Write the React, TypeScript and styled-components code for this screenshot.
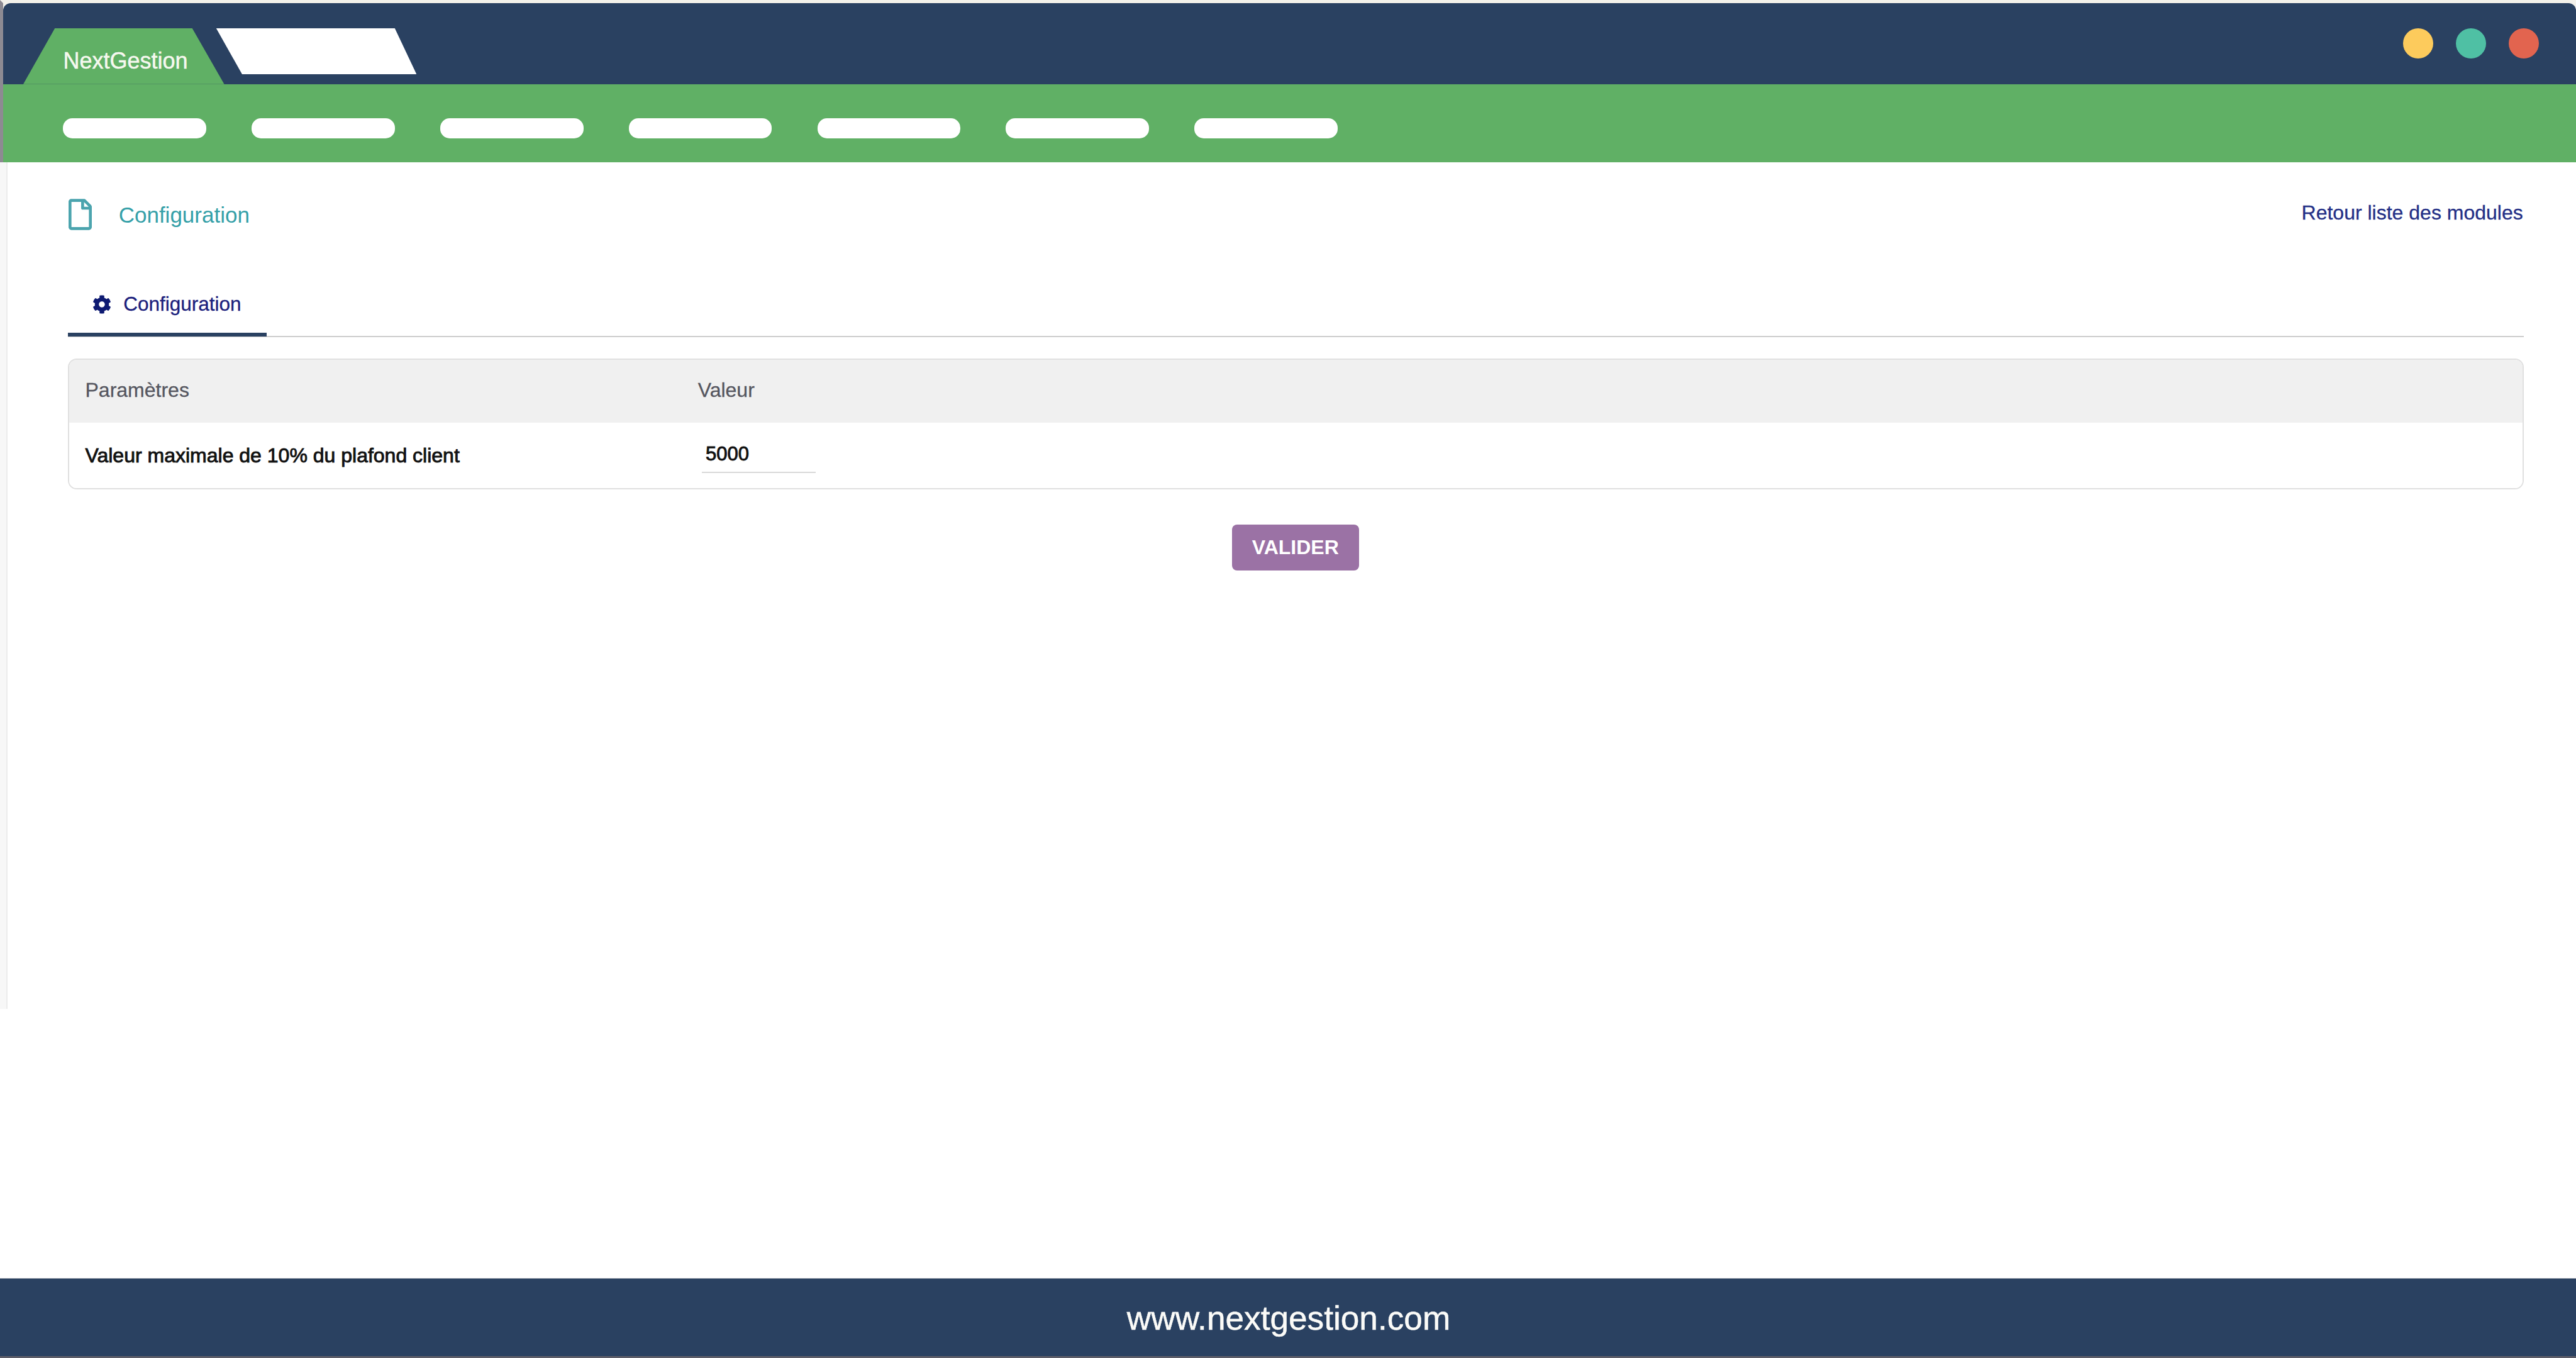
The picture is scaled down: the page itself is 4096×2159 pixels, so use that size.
import React from "react";
import styled, { createGlobalStyle } from "styled-components";
import { FaCog, FaRegFile } from "react-icons/fa";

const navy = "#2a4161";
const green = "#60b065";

const GlobalStyle = createGlobalStyle`
  html, body {
    margin: 0;
    padding: 0;
    background: #fff;
  }
  body {
    font-family: "Liberation Sans", Arial, sans-serif;
  }
  * {
    box-sizing: border-box;
  }
`;

const Shell = styled.div`
  display: flex;
  flex-direction: column;
  min-height: 2159px;
  height: 2159px;
  overflow: hidden;
`;

const Chrome = styled.div`
  flex: none;
  background: #f3f1ea;
  border-top: 5px solid #f3f1ea;
  border-left: 5px solid #8d8a92;
`;

const TopBar = styled.header`
  display: flex;
  align-items: flex-start;
  height: 128.8px;
  padding: 39.6px 58.6px 0 32px;
  background: ${navy};
  border-radius: 12px 12px 0 0;
`;

const BrandTab = styled.div`
  width: 319.5px;
  height: 89.2px;
  padding: 32.5px 0 0 63.5px;
  background: ${green};
  clip-path: polygon(15.8% 0, 84% 0, 100% 100%, 0 100%);
  color: #f6f8ef;
  font-size: 36px;
  line-height: 40px;
  -webkit-text-stroke: 0.5px #f6f8ef;
`;

const BlankTab = styled.div`
  width: 318.8px;
  height: 73.5px;
  margin-left: -13px;
  background: #fff;
  clip-path: polygon(0 0, 89.1% 0, 100% 100%, 13% 100%);
`;

const Dots = styled.div`
  display: flex;
  gap: 36.2px;
  margin-left: auto;
`;

const Dot = styled.span<{ $color: string }>`
  width: 48px;
  height: 48px;
  border-radius: 50%;
  background: ${({ $color }) => $color};
`;

const NavBar = styled.nav`
  display: flex;
  gap: 72.1px;
  height: 123.8px;
  padding: 54.5px 0 0 95px;
  background: ${green};
`;

const NavPill = styled.span`
  width: 227.8px;
  height: 31.4px;
  border-radius: 15px;
  background: #fff;
`;

const Main = styled.div`
  display: flex;
  flex: 1;
  min-height: 0;
`;

const Rail = styled.div`
  flex: none;
  width: 12px;
  height: 1346.6px;
  background: #f7f7f7;
  border-right: 2px solid #ececec;
`;

const Content = styled.main`
  flex: 1;
  min-width: 0;
  padding: 58.6px 82.7px 0 96.2px;
`;

const TitleRow = styled.div`
  display: flex;
  align-items: center;
  height: 50px;
  padding-left: 1px;
`;

const PageIcon = styled(FaRegFile)`
  flex: none;
  width: 37px;
  height: 50px;
  color: #4ba4ae;
`;

const PageTitle = styled.h1`
  margin: 1px 0 0 42.5px;
  color: #35a0a8;
  font-size: 35px;
  font-weight: 400;
`;

const BackLink = styled.a`
  margin-left: auto;
  margin-right: 1.6px;
  padding-bottom: 5px;
  color: #232f86;
  font-size: 32px;
  font-weight: 400;
  -webkit-text-stroke: 0.3px #232f86;
`;

const TabBar = styled.div`
  display: flex;
  margin-top: 97px;
  border-bottom: 2.5px solid #cdcdcd;
`;

const Tab = styled.div`
  display: flex;
  align-items: center;
  gap: 19px;
  width: 316px;
  height: 71.4px;
  margin-bottom: -1px;
  padding: 0 0 24.4px 39px;
  border-bottom: 6px solid ${navy};
  color: #1b207c;
  font-size: 31.5px;
  -webkit-text-stroke: 0.3px #1b207c;
`;

const TabIcon = styled(FaCog)`
  flex: none;
  width: 30px;
  height: 30px;
  color: #0e1a72;
`;

const Table = styled.section`
  margin-top: 34.5px;
  height: 208.2px;
  border: 2px solid #e0e0e0;
  border-radius: 14px;
  overflow: hidden;
`;

const TableRow = styled.div<{ $head?: boolean }>`
  display: grid;
  grid-template-columns: 999.5px 1fr;
  align-items: center;
  height: ${({ $head }) => ($head ? "100px" : "106.2px")};
  background: ${({ $head }) => ($head ? "#f0f0f0" : "#fff")};
`;

const HeadCell = styled.div<{ $first?: boolean }>`
  padding: 0 0 4px ${({ $first }) => ($first ? "25.3px" : "0")};
  color: #55565f;
  font-size: 32px;
  -webkit-text-stroke: 0.3px #55565f;
`;

const LabelCell = styled.div`
  padding: 0 0 2px 25.3px;
  color: #111;
  font-size: 32px;
  -webkit-text-stroke: 0.9px #111;
`;

const ValueInput = styled.input`
  display: block;
  width: 181px;
  height: 58px;
  margin: 0 0 5px 6.4px;
  padding: 0 0 0 6px;
  border: 0;
  border-bottom: 2px solid #d8d8d8;
  outline: none;
  background: transparent;
  color: #111;
  font-family: inherit;
  font-size: 31px;
  -webkit-text-stroke: 0.9px #111;
`;

const Actions = styled.div`
  display: flex;
  justify-content: center;
  margin-top: 56px;
  padding-right: 2px;
`;

const SubmitButton = styled.button`
  width: 201.5px;
  height: 72.6px;
  padding: 0;
  border: 0;
  border-radius: 8px;
  background: #9b72a5;
  color: #fff;
  font-family: inherit;
  font-size: 32px;
  font-weight: 700;
`;

const Footer = styled.footer`
  flex: none;
  display: flex;
  align-items: center;
  justify-content: center;
  height: 127.2px;
  padding: 3px 0 0 2px;
  background: ${navy};
  border-top: 1px solid #8f98a6;
  border-bottom: 3px solid #5d5d68;
  color: #fbfbf8;
  font-size: 53.2px;
  -webkit-text-stroke: 0.5px #fbfbf8;
`;

const dotColors = ["#fdcb5c", "#4fc0a4", "#e2644f"];
const navItems = [1, 2, 3, 4, 5, 6, 7];

export default function App() {
  return (
    <>
      <GlobalStyle />
      <Shell>
        <Chrome>
          <TopBar>
            <BrandTab>NextGestion</BrandTab>
            <BlankTab />
            <Dots>
              {dotColors.map((color) => (
                <Dot key={color} $color={color} />
              ))}
            </Dots>
          </TopBar>
          <NavBar>
            {navItems.map((item) => (
              <NavPill key={item} />
            ))}
          </NavBar>
        </Chrome>
        <Main>
          <Rail />
          <Content>
            <TitleRow>
              <PageIcon />
              <PageTitle>Configuration</PageTitle>
              <BackLink>Retour liste des modules</BackLink>
            </TitleRow>
            <TabBar>
              <Tab>
                <TabIcon />
                Configuration
              </Tab>
            </TabBar>
            <Table>
              <TableRow $head>
                <HeadCell $first>Paramètres</HeadCell>
                <HeadCell>Valeur</HeadCell>
              </TableRow>
              <TableRow>
                <LabelCell>Valeur maximale de 10% du plafond client</LabelCell>
                <ValueInput defaultValue="5000" />
              </TableRow>
            </Table>
            <Actions>
              <SubmitButton>VALIDER</SubmitButton>
            </Actions>
          </Content>
        </Main>
        <Footer>www.nextgestion.com</Footer>
      </Shell>
    </>
  );
}
